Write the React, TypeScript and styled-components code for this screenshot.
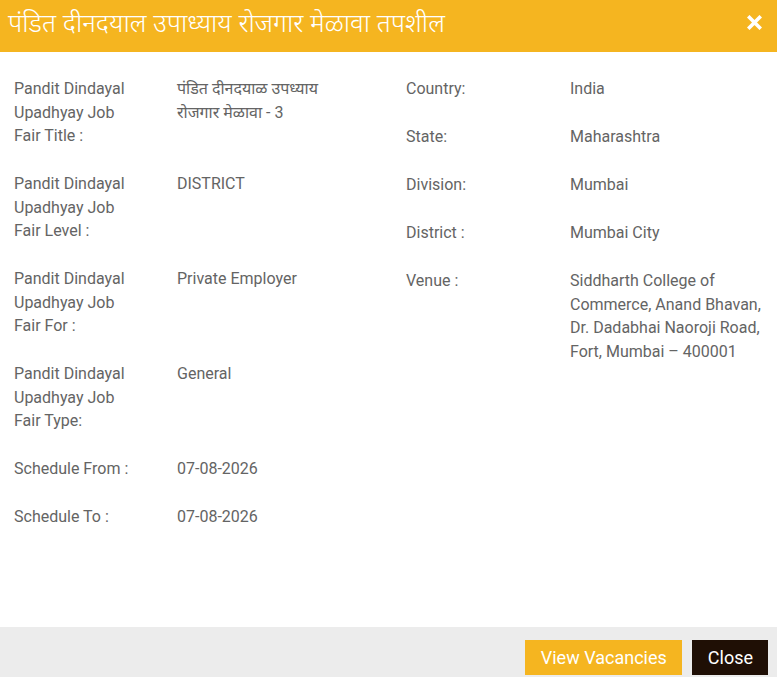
import React from "react";
import styled, { createGlobalStyle } from "styled-components";

const GlobalStyle = createGlobalStyle`
  html, body {
    margin: 0;
    padding: 0;
    background: #ffffff;
  }
  body {
    font-family: Roboto, "Noto Sans", "Liberation Sans", sans-serif;
  }
`;

type Row = { label: string; value: string };

const leftRows: Row[] = [
  { label: "Pandit Dindayal Upadhyay Job Fair Title :", value: "पंडित दीनदयाळ उपध्याय रोजगार मेळावा - 3" },
  { label: "Pandit Dindayal Upadhyay Job Fair Level :", value: "DISTRICT" },
  { label: "Pandit Dindayal Upadhyay Job Fair For :", value: "Private Employer" },
  { label: "Pandit Dindayal Upadhyay Job Fair Type:", value: "General" },
  { label: "Schedule From :", value: "07-08-2026" },
  { label: "Schedule To :", value: "07-08-2026" },
];

const rightRows: Row[] = [
  { label: "Country:", value: "India" },
  { label: "State:", value: "Maharashtra" },
  { label: "Division:", value: "Mumbai" },
  { label: "District :", value: "Mumbai City" },
  {
    label: "Venue :",
    value: "Siddharth College of Commerce, Anand Bhavan, Dr. Dadabhai Naoroji Road, Fort, Mumbai – 400001",
  },
];

function App() {
  return (
    <>
      <GlobalStyle />
      <Modal>
        <Header>
          <Title>पंडित दीनदयाल उपाध्याय रोजगार मेळावा तपशील</Title>
          <CloseIcon aria-label="close">
            <svg width="15" height="15" viewBox="0 0 15 15">
              <path
                d="M2.5 2.5 L12.5 12.5 M12.5 2.5 L2.5 12.5"
                stroke="#ffffff"
                strokeWidth="3.6"
                strokeLinecap="square"
              />
            </svg>
          </CloseIcon>
        </Header>
        <Body>
          <Column>
            {leftRows.map((r) => (
              <DetailRow key={r.label} $labelWidth={163}>
                <Label $maxWidth={125}>{r.label}</Label>
                <Value $maxWidth={180}>{r.value}</Value>
              </DetailRow>
            ))}
          </Column>
          <Column>
            {rightRows.map((r) => (
              <DetailRow key={r.label} $labelWidth={164}>
                <Label $maxWidth={140}>{r.label}</Label>
                <Value $maxWidth={200}>{r.value}</Value>
              </DetailRow>
            ))}
          </Column>
        </Body>
        <Footer>
          <Button $variant="primary">View Vacancies</Button>
          <Button $variant="dark">Close</Button>
        </Footer>
      </Modal>
    </>
  );
}

export default App;

const Modal = styled.div`
  width: 777px;
  height: 677px;
  display: flex;
  flex-direction: column;
  background: #ffffff;
  overflow: hidden;
`;

const Header = styled.div`
  height: 52px;
  flex-shrink: 0;
  background-color: #f5b520;
  display: flex;
  align-items: center;
  justify-content: space-between;
  padding: 0 14px 0 8px;
  box-sizing: border-box;
`;

const Title = styled.h4`
  margin: 0;
  color: #ffffff;
  font-size: 26px;
  font-weight: 350;
  line-height: 1;
  margin-top: -8px;
  font-family: "Noto Sans", "Noto Sans Devanagari", sans-serif;
`;

const CloseIcon = styled.span`
  display: flex;
  align-items: center;
  width: 16px;
  height: 16px;
  margin-top: -8px;
  cursor: pointer;
`;

const Body = styled.div`
  flex: 1;
  display: grid;
  grid-template-columns: 392px 1fr;
  padding: 25px 12px 0 14px;
  box-sizing: border-box;
`;

const Column = styled.div`
  display: flex;
  flex-direction: column;
  gap: 24.5px;
`;

const DetailRow = styled.div<{ $labelWidth: number }>`
  display: grid;
  grid-template-columns: ${(p) => p.$labelWidth}px 1fr;
  font-size: 16px;
  line-height: 23.5px;
  color: #646464;
`;

const Label = styled.div<{ $maxWidth: number }>`
  max-width: ${(p) => p.$maxWidth}px;
`;

const Value = styled.div<{ $maxWidth: number }>`
  max-width: ${(p) => p.$maxWidth}px;
  font-family: Roboto, "Noto Sans", "Noto Sans Devanagari", sans-serif;
`;

const Footer = styled.div`
  height: 50px;
  flex-shrink: 0;
  background: #ececec;
  display: flex;
  justify-content: flex-end;
  align-items: flex-start;
  gap: 10px;
  padding: 13px 9px 0 0;
  box-sizing: border-box;
`;

const Button = styled.button<{ $variant: "primary" | "dark" }>`
  height: 35px;
  border: none;
  border-radius: 0;
  padding: 0 15px 0 16px;
  font-family: Roboto, "Liberation Sans", sans-serif;
  font-size: 18px;
  font-weight: 400;
  color: #ffffff;
  background: ${(p) => (p.$variant === "primary" ? "#f5b520" : "#1f0f05")};
  cursor: pointer;
`;
